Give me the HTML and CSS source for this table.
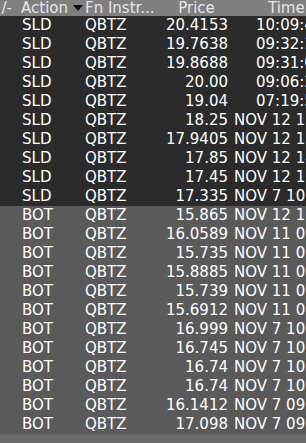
FILE: index.html
```html
<!DOCTYPE html>
<html>
<head>
<meta charset="utf-8">
<link rel="stylesheet" href="styles.css">
</head>
<body>
<div class="blotter">
  <div class="row head">
    <div class="c pm">+/-</div>
    <div class="c act">Action<span class="sort"></span></div>
    <div class="c fn">Fn Instr...</div>
    <div class="c price">Price</div>
    <div class="c time">Time</div>
  </div>
  <div class="row sld"><div class="c pm"></div><div class="c act">SLD</div><div class="c fn">QBTZ</div><div class="c price">20.4153</div><div class="c time today">10:09:41</div></div>
  <div class="row sld"><div class="c pm"></div><div class="c act">SLD</div><div class="c fn">QBTZ</div><div class="c price">19.7638</div><div class="c time today">09:32:16</div></div>
  <div class="row sld"><div class="c pm"></div><div class="c act">SLD</div><div class="c fn">QBTZ</div><div class="c price">19.8688</div><div class="c time today">09:31:03</div></div>
  <div class="row sld"><div class="c pm"></div><div class="c act">SLD</div><div class="c fn">QBTZ</div><div class="c price">20.00</div><div class="c time today">09:06:28</div></div>
  <div class="row sld"><div class="c pm"></div><div class="c act">SLD</div><div class="c fn">QBTZ</div><div class="c price">19.04</div><div class="c time today">07:19:55</div></div>
  <div class="row sld"><div class="c pm"></div><div class="c act">SLD</div><div class="c fn">QBTZ</div><div class="c price">18.25</div><div class="c time">NOV 12 15:51</div></div>
  <div class="row sld"><div class="c pm"></div><div class="c act">SLD</div><div class="c fn">QBTZ</div><div class="c price">17.9405</div><div class="c time">NOV 12 15:33</div></div>
  <div class="row sld"><div class="c pm"></div><div class="c act">SLD</div><div class="c fn">QBTZ</div><div class="c price">17.85</div><div class="c time">NOV 12 14:02</div></div>
  <div class="row sld"><div class="c pm"></div><div class="c act">SLD</div><div class="c fn">QBTZ</div><div class="c price">17.45</div><div class="c time">NOV 12 11:20</div></div>
  <div class="row sld"><div class="c pm"></div><div class="c act">SLD</div><div class="c fn">QBTZ</div><div class="c price">17.335</div><div class="c time">NOV 7 10:04</div></div>
  <div class="row bot"><div class="c pm"></div><div class="c act">BOT</div><div class="c fn">QBTZ</div><div class="c price">15.865</div><div class="c time">NOV 12 10:12</div></div>
  <div class="row bot"><div class="c pm"></div><div class="c act">BOT</div><div class="c fn">QBTZ</div><div class="c price">16.0589</div><div class="c time">NOV 11 09:58</div></div>
  <div class="row bot"><div class="c pm"></div><div class="c act">BOT</div><div class="c fn">QBTZ</div><div class="c price">15.735</div><div class="c time">NOV 11 09:47</div></div>
  <div class="row bot"><div class="c pm"></div><div class="c act">BOT</div><div class="c fn">QBTZ</div><div class="c price">15.8885</div><div class="c time">NOV 11 09:41</div></div>
  <div class="row bot"><div class="c pm"></div><div class="c act">BOT</div><div class="c fn">QBTZ</div><div class="c price">15.739</div><div class="c time">NOV 11 09:36</div></div>
  <div class="row bot"><div class="c pm"></div><div class="c act">BOT</div><div class="c fn">QBTZ</div><div class="c price">15.6912</div><div class="c time">NOV 11 09:33</div></div>
  <div class="row bot"><div class="c pm"></div><div class="c act">BOT</div><div class="c fn">QBTZ</div><div class="c price">16.999</div><div class="c time">NOV 7 10:22</div></div>
  <div class="row bot"><div class="c pm"></div><div class="c act">BOT</div><div class="c fn">QBTZ</div><div class="c price">16.745</div><div class="c time">NOV 7 10:15</div></div>
  <div class="row bot"><div class="c pm"></div><div class="c act">BOT</div><div class="c fn">QBTZ</div><div class="c price">16.74</div><div class="c time">NOV 7 10:11</div></div>
  <div class="row bot"><div class="c pm"></div><div class="c act">BOT</div><div class="c fn">QBTZ</div><div class="c price">16.74</div><div class="c time">NOV 7 10:08</div></div>
  <div class="row bot"><div class="c pm"></div><div class="c act">BOT</div><div class="c fn">QBTZ</div><div class="c price">16.1412</div><div class="c time">NOV 7 09:52</div></div>
  <div class="row bot"><div class="c pm"></div><div class="c act">BOT</div><div class="c fn">QBTZ</div><div class="c price">17.098</div><div class="c time">NOV 7 09:44</div></div>
</div>
</body>
</html>
```

FILE: styles.css
```css
html, body {
  margin: 0;
  padding: 0;
}
body {
  width: 306px;
  height: 443px;
  overflow: hidden;
  background: #6b6b6b;
  font-family: "DejaVu Sans", sans-serif;
  font-size: 15px;
  color: #ffffff;
}
.blotter {
  display: flex;
  flex-direction: column;
  width: 306px;
  overflow: hidden;
}
.row {
  display: grid;
  grid-template-columns: 19px 64px 78px 71px 110px;
  height: 19px;
  line-height: 19px;
  white-space: nowrap;
}
.row.head {
  height: 16px;
  line-height: 16px;
  background: #7f7f7f;
  color: #e6e6e6;
}
.row.sld { background: #2b2b2b; }
.row.bot { background: #5a5a5a; }
.c {
  overflow: hidden;
  white-space: nowrap;
}
.pm {
  text-indent: -11px;
  overflow: visible;
}
.act { padding-left: 3px; }
.head .act { padding-left: 2px; display: flex; align-items: center; }
.sort {
  display: inline-block;
  width: 0;
  height: 0;
  margin-left: 5px;
  border-left: 5px solid transparent;
  border-right: 5px solid transparent;
  border-top: 6px solid #111111;
}
.fn { padding-left: 2px; }
.price { text-align: right; padding-right: 4px; }
.head .price { text-align: center; padding-right: 0; }
.time { padding-left: 2px; }
.time.today { padding-left: 24px; }
.head .time { text-align: left; padding-left: 36px; }
```
